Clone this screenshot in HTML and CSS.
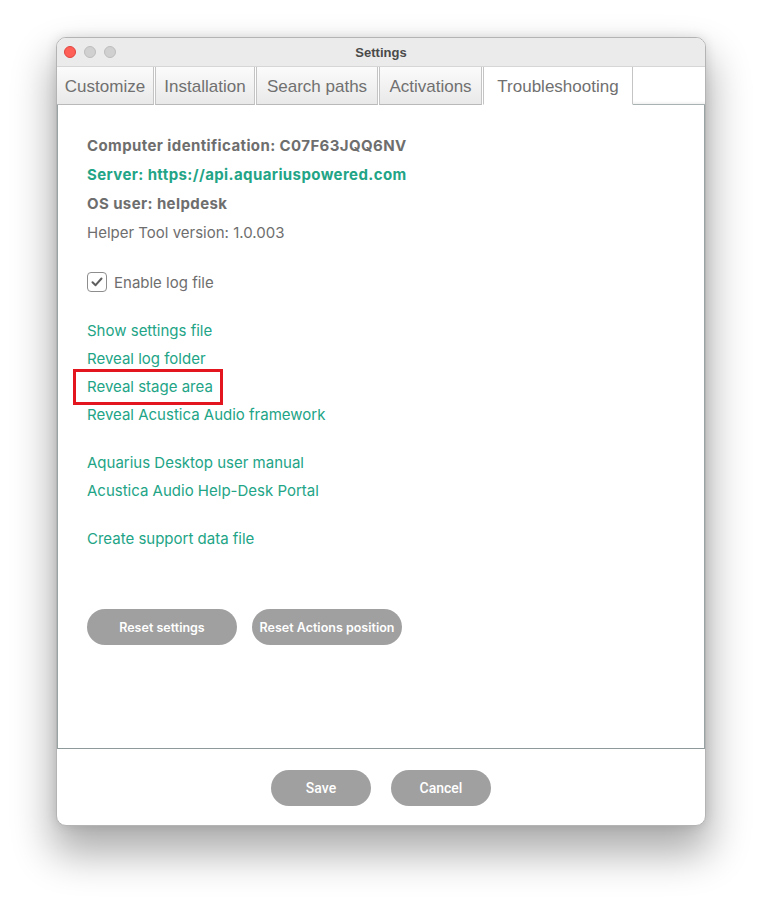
FILE: index.html
```html
<!DOCTYPE html>
<html lang="en">
<head>
    <meta charset="UTF-8">
    <meta name="viewport" content="width=device-width, initial-scale=1.0">
    <title>Settings</title>
    <link rel="stylesheet" href="styles.css">
</head>
<body>

    <div class="window">
        <!-- Title bar -->
        <div class="titlebar">
            <div class="lights">
                <span class="light red"></span>
                <span class="light grey"></span>
                <span class="light grey"></span>
            </div>
            <div class="title">Settings</div>
            <div></div>
        </div>

        <!-- Tabs -->
        <div class="tabs">
            <div class="tab w-customize">Customize</div>
            <div class="tab w-install">Installation</div>
            <div class="tab w-search">Search paths</div>
            <div class="tab w-activ">Activations</div>
            <div class="tab active w-trouble">Troubleshooting</div>
            <div class="tab-fill"></div>
        </div>

        <!-- Troubleshooting panel -->
        <div class="panel">
            <div class="info">
                <div class="strong">Computer identification: C07F63JQQ6NV</div>
                <div class="strong teal">Server: https://api.aquariuspowered.com</div>
                <div class="strong">OS user: helpdesk</div>
                <div>Helper Tool version: 1.0.003</div>
            </div>

            <label class="check-row">
                <span class="checkbox">
                    <svg width="12" height="10" viewBox="0 0 12 10"><path d="M1.5 5.2 L4.6 8.2 L10.5 1.5" fill="none" stroke="#5e5e5e" stroke-width="2" stroke-linecap="round" stroke-linejoin="round"/></svg>
                </span>
                Enable log file
            </label>

            <div class="links">
                <div class="link">Show settings file</div>
                <div class="link">Reveal log folder</div>
                <div class="link highlight">Reveal stage area</div>
                <div class="link">Reveal Acustica Audio framework</div>
            </div>

            <div class="links">
                <div class="link">Aquarius Desktop user manual</div>
                <div class="link">Acustica Audio Help-Desk Portal</div>
            </div>

            <div class="links">
                <div class="link">Create support data file</div>
            </div>

            <div class="actions">
                <button class="pill">Reset settings</button>
                <button class="pill">Reset Actions position</button>
            </div>
        </div>

        <!-- Footer -->
        <div class="footer">
            <button class="pill small">Save</button>
            <button class="pill small">Cancel</button>
        </div>
    </div>

</body>
</html>
```

FILE: styles.css
```css
html, body {
    height: 100%;
}
body {
    margin: 0;
    background-color: #fff;
    font-family: Inter, "Noto Sans", sans-serif;
    padding: 37px 0 0 56px;
    box-sizing: border-box;
}
.window {
    width: 650px;
    height: 789px;
    border-radius: 10px;
    display: flex;
    flex-direction: column;
    background-color: #fff;
    border: 1px solid #b4b4b4;
    box-sizing: border-box;
    box-shadow: 0 24px 40px 4px rgba(0, 0, 0, 0.32), 0 0 12px rgba(0, 0, 0, 0.12);
}

/* Title bar */
.titlebar {
    height: 28px;
    background-color: #ebebeb;
    border-radius: 9px 9px 0 0;
    display: grid;
    grid-template-columns: 1fr auto 1fr;
    align-items: center;
}
.lights {
    display: flex;
    gap: 8px;
    padding-left: 7px;
}
.light {
    width: 12px;
    height: 12px;
    border-radius: 50%;
    box-sizing: border-box;
}
.red { background-color: #fe5f57; border: 1px solid #e0443e; }
.grey { background-color: #d0d0d0; border: 1px solid #bdbdbd; }
.title {
    font-family: "Liberation Sans", Arial, sans-serif;
    font-weight: bold;
    font-size: 13px;
    color: #4a4a4a;
}

/* Tabs */
.tabs {
    display: flex;
    height: 39px;
    border-top: 1px solid #d6d6d6;
    box-sizing: border-box;
}
.tab {
    box-sizing: border-box;
    height: 38px;
    display: flex;
    align-items: center;
    justify-content: center;
    padding-top: 2px;
    font-family: "Liberation Sans", Arial, sans-serif;
    font-size: 17px;
    color: #707070;
    background: linear-gradient(#fbfbfb, #e9e9e9);
    border-right: 1px solid #c4c4c4;
    border-left: 1px solid #c4c4c4;
    border-bottom: 1px solid #b9b9b9;
    margin-right: 1px;
}
.tab:first-child { border-left: none; }
.w-customize { width: 97px; }
.w-install { width: 100px; }
.w-search { width: 122px; }
.w-activ { width: 103px; }
.w-trouble { width: 150px; }
.tab.active {
    background: #fff;
    border-bottom: 1px solid #fff;
    margin-right: 0;
}
.tab-fill {
    flex: 1;
    height: 38px;
    box-sizing: border-box;
    border-bottom: 1px solid #a9b2b2;
    box-shadow: inset 0 -3px 3px -2px rgba(0, 0, 0, 0.08);
}

/* Panel */
.panel {
    height: 644px;
    box-sizing: border-box;
    border-left: 1px solid #9aa3a3;
    border-right: 1px solid #9aa3a3;
    border-bottom: 1px solid #8e9999;
    padding: 26px 29px 0;
    font-size: 15px;
    color: #6e6e6e;
}
.info {
    line-height: 29px;
}
.strong {
    font-weight: 700;
    letter-spacing: 0.4px;
}
.teal { color: #22a486; }

.check-row {
    display: flex;
    align-items: center;
    gap: 7px;
    height: 28px;
    margin-top: 21px;
}
.checkbox {
    width: 20px;
    height: 20px;
    box-sizing: border-box;
    border: 1px solid #8d8d8d;
    border-radius: 4px;
    display: flex;
    align-items: center;
    justify-content: center;
}

.links {
    margin-top: 21px;
    line-height: 28px;
    color: #22a486;
}
.links + .links { margin-top: 20px; }

.highlight {
    width: 150px;
    box-sizing: border-box;
    margin: -4px 0 -4px -14px;
    padding: 1px 0 1px 11px;
    border: 3px solid #e3161f;
}

.actions {
    display: flex;
    gap: 15px;
    margin-top: 56px;
}
.pill {
    width: 150px;
    height: 36px;
    border: none;
    border-radius: 18px;
    background-color: #a0a0a0;
    color: #fff;
    font-family: Inter, sans-serif;
    font-weight: 600;
    font-size: 12.5px;
    padding: 0;
}

/* Footer */
.footer {
    flex: 1;
    display: flex;
    justify-content: center;
    align-items: center;
    gap: 20px;
    padding-top: 2px;
}
.pill.small {
    width: 100px;
    font-family: Roboto, sans-serif;
    font-weight: 500;
    font-size: 14px;
}
```
